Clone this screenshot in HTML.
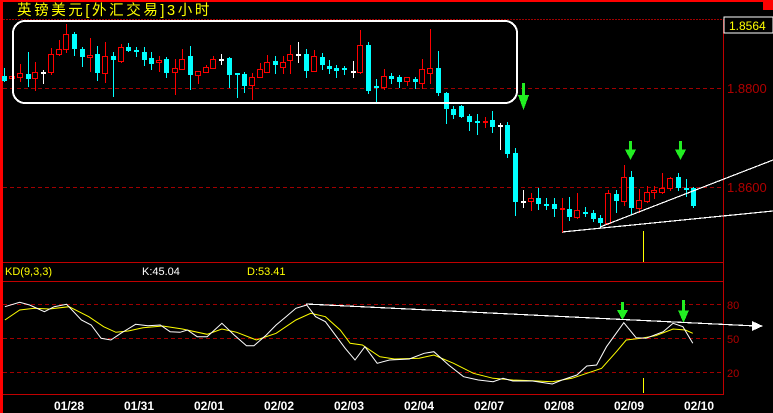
<!DOCTYPE html>
<html><head><meta charset="utf-8"><style>
html,body{margin:0;padding:0;background:#000;width:773px;height:413px;overflow:hidden}
svg{display:block}
text{font-family:"Liberation Sans","Noto Sans CJK SC",sans-serif}
</style></head><body>
<svg id="s" width="773" height="413" viewBox="0 0 773 413" xmlns="http://www.w3.org/2000/svg" shape-rendering="crispEdges">
<rect width="773" height="413" fill="#000"/>
<rect x="0" y="0" width="773" height="2" fill="#ff0000"/>
<rect x="0" y="0" width="3" height="413" fill="#ff0000"/>
<rect x="763" y="2" width="10" height="8" fill="#ff0000"/>
<line x1="3" y1="19.5" x2="723" y2="19.5" stroke="#a00000" stroke-dasharray="2,1"/>
<text x="17" y="15" fill="#ffff00" font-size="14.5" letter-spacing="2.6" font-family="'Noto Sans CJK SC',sans-serif">英镑美元[外汇交易]3小时</text>
<line x1="723.5" y1="19" x2="723.5" y2="395" stroke="#c00000"/>
<line x1="3" y1="262.5" x2="723" y2="262.5" stroke="#c00000"/>
<line x1="3" y1="281.5" x2="723" y2="281.5" stroke="#c00000"/>
<line x1="3" y1="394.5" x2="723" y2="394.5" stroke="#c00000"/>
<line x1="3" y1="88.5" x2="723" y2="88.5" stroke="#a00000" stroke-dasharray="4,3"/>
<line x1="3" y1="187.5" x2="723" y2="187.5" stroke="#a00000" stroke-dasharray="4,3"/>
<line x1="3" y1="304.5" x2="723" y2="304.5" stroke="#a00000" stroke-dasharray="4,3"/>
<line x1="3" y1="338.5" x2="723" y2="338.5" stroke="#a00000" stroke-dasharray="4,3"/>
<line x1="3" y1="372.5" x2="723" y2="372.5" stroke="#a00000" stroke-dasharray="4,3"/>
<rect x="724" y="17" width="49" height="16" fill="#000" stroke="#fff" stroke-width="1"/>
<text x="729" y="30" fill="#ffff00" font-size="12">1.8564</text>
<text x="727" y="93" fill="#b00000" font-size="13">1.8800</text>
<text x="727" y="192" fill="#b00000" font-size="13">1.8600</text>
<text x="727" y="309" fill="#b00000" font-size="11">80</text>
<text x="727" y="343" fill="#b00000" font-size="11">50</text>
<text x="727" y="377" fill="#b00000" font-size="11">20</text>
<text x="5" y="275" fill="#ffff00" font-size="11">KD(9,3,3)</text>
<text x="142" y="275" fill="#fff" font-size="11">K:45.04</text>
<text x="247" y="275" fill="#ffff00" font-size="11">D:53.41</text>
<g fill="#fff" font-size="12" font-weight="bold" text-anchor="middle">
<text x="69" y="410">01/28</text><text x="139" y="410">01/31</text><text x="209" y="410">02/01</text><text x="279" y="410">02/02</text><text x="349" y="410">02/03</text><text x="419" y="410">02/04</text><text x="489" y="410">02/07</text><text x="559" y="410">02/08</text><text x="629" y="410">02/09</text><text x="699" y="410">02/10</text>
</g>
<g id="c"></g>
<rect x="13" y="21" width="504" height="82" rx="12" fill="none" stroke="#fff" stroke-width="2"/>
<line x1="562" y1="232" x2="773" y2="211" stroke="#fff" stroke-width="1.2"/>
<line x1="600" y1="227" x2="773" y2="160" stroke="#fff" stroke-width="1.2"/>
<line x1="562.5" y1="198" x2="562.5" y2="232" stroke="#ff0000"/>
<line x1="643.5" y1="231" x2="643.5" y2="262" stroke="#ffff00"/>
<line x1="643.5" y1="378" x2="643.5" y2="393" stroke="#ffff00"/>
<line x1="306" y1="304" x2="756" y2="326" stroke="#fff" stroke-width="1.2"/>
<polygon points="752,321 763,326 752,331" fill="#fff"/>
<g id="k"></g>
</svg>
<script>
var NS="http://www.w3.org/2000/svg";
function el(p,t,a){var e=document.createElementNS(NS,t);for(var k in a)e.setAttribute(k,a[k]);p.appendChild(e);return e;}
var g=document.getElementById('c');
var C=[[4,76,81,68,81,'c'],[12,76,78,76,78,'r'],[20,73,77,64,81,'r'],[28,74,79,52,86,'c'],[35,72,78,62,90,'r'],[43,72,72,70,83,'w'],
[51,54,72,48,74,'r'],[59,49,54,40,55,'r'],[66,34,49,24,52,'r'],[74,34,49,32,55,'c'],[82,49,57,47,66,'c'],[90,55,57,38,71,'r'],
[97,54,73,46,80,'c'],[105,56,73,42,82,'r'],[113,56,60,52,96,'c'],[121,47,61,44,62,'r'],[128,47,51,43,51,'c'],[136,50,51,47,56,'c'],
[144,52,60,47,65,'c'],[151,58,64,52,69,'c'],[159,60,62,56,71,'r'],[166,59,73,57,77,'c'],[175,68,72,59,94,'r'],[182,59,69,49,69,'r'],
[190,56,75,46,89,'c'],[198,71,75,71,83,'r'],[206,67,72,65,72,'r'],[213,59,68,56,68,'r'],[221,59,59,54,64,'w'],[229,58,75,57,87,'c'],
[237,73,75,73,97,'c'],[244,74,86,72,92,'c'],[252,77,85,73,99,'r'],[260,69,77,63,77,'r'],[267,62,72,55,72,'r'],[275,61,65,56,73,'c'],
[283,62,67,56,73,'r'],[290,54,60,45,73,'r'],[298,54,54,42,62,'w'],[306,54,71,49,77,'c'],[314,56,71,50,71,'r'],[322,57,65,53,69,'c'],
[329,66,69,60,73,'c'],[336,68,71,65,77,'c'],[344,68,70,66,74,'c'],[353,71,71,61,77,'w'],[360,45,72,30,73,'r'],[368,45,91,42,93,'c'],
[376,86,87,79,103,'c'],[384,76,87,69,89,'r'],[391,76,79,73,83,'c'],[399,77,82,75,87,'c'],[407,77,81,77,85,'r'],[415,79,82,77,88,'c'],
[422,69,83,59,88,'r'],[430,68,73,29,83,'r'],[438,68,93,51,95,'c'],[446,93,109,92,123,'c'],[453,109,115,106,118,'c'],[461,106,117,105,117,'c'],
[469,116,122,114,130,'c'],[477,121,121,114,134,'c'],[485,121,121,117,127,'r'],[492,120,127,111,132,'c'],[500,125,125,123,149,'w'],
[507,125,154,122,157,'c'],[515,153,202,148,215,'c'],[523,201,201,190,207,'w'],[531,198,201,193,210,'r'],[538,198,204,188,209,'c'],
[546,204,204,198,209,'c'],[554,204,209,198,216,'c'],[562,208,208,198,232,'r'],[569,209,217,197,220,'c'],[577,210,217,193,218,'r'],
[585,212,212,207,216,'c'],[593,213,219,210,221,'c'],[600,218,223,215,226,'c'],[608,193,223,190,224,'r'],[616,194,201,190,212,'c'],
[624,177,201,165,205,'r'],[631,177,208,171,214,'c'],[639,200,208,189,212,'r'],[647,192,201,186,202,'r'],[654,190,192,186,198,'r'],
[662,188,192,173,193,'r'],[670,178,188,177,190,'r'],[678,177,188,173,190,'c'],[686,188,188,179,196,'c'],[693,188,206,187,207,'c']];
C.forEach(function(d){var x=d[0],col=d[5]=='r'?'#ff0000':(d[5]=='c'?'#00ffff':'#ffffff');
el(g,'line',{x1:x+.5,y1:d[3],x2:x+.5,y2:d[4]+1,stroke:col});
var h=d[2]-d[1];
if(h<2){el(g,'rect',{x:x-2,y:d[1],width:5,height:2,fill:col});}
else if(d[5]=='r'){el(g,'rect',{x:x-2.5,y:d[1]+.5,width:5,height:h,fill:'#000',stroke:col,'stroke-width':1.2});}
else{el(g,'rect',{x:x-2,y:d[1],width:5,height:h,fill:col});}
});
function arrow(x,y1,y2){var p=el(g,'g',{fill:'#22ee22'});
el(p,'rect',{x:x-1,y:y1,width:3,height:(y2-y1)*0.5});
el(p,'polygon',{points:(x-5)+','+(y1+(y2-y1)*0.45)+' '+(x+6)+','+(y1+(y2-y1)*0.45)+' '+(x+0.5)+','+y2});}
arrow(523,83,110);arrow(630,141,160);arrow(680,141,160);arrow(622,302,320);arrow(683,300,323);
var K=[[10,155],[40,142],[60,150],[90,170],[110,155],[135,148],[165,195],[185,210],[205,250],[225,255],[245,235],[275,208],[300,212],[325,210],[345,230],[365,232],[380,225],[400,245],[420,245],[450,205],[475,240],[500,272],[515,272],[540,240],[560,210],[580,185],[600,160],[622,150],[640,185],[660,200],[700,280],[720,315],[740,275],[765,325],[790,315],[830,312],[860,295],[880,290],[910,330],[940,365],[970,375],[1000,380],[1020,370],[1040,378],[1080,378],[1120,387],[1140,375],[1170,360],[1190,333],[1210,330],[1230,275],[1265,203],[1290,248],[1310,250],[1345,230],[1365,205],[1385,215],[1405,265]];
var D=[[10,195],[40,165],[70,160],[100,162],[140,155],[180,185],[210,215],[235,232],[260,228],[290,218],[330,213],[370,222],[420,238],[450,222],[480,232],[520,255],[560,235],[600,195],[630,175],[660,185],[690,225],[710,265],[735,270],[770,305],[800,312],[850,310],[880,300],[920,325],[960,355],[1000,370],[1040,375],[1080,377],[1120,380],[1160,370],[1190,355],[1220,340],[1250,290],[1270,255],[1300,250],[1330,242],[1365,222],[1390,225],[1405,235]];
var kg=document.getElementById('k');
function pl(a,c){el(kg,'polyline',{points:a.map(function(p){return (p[0]/2.028).toFixed(1)+','+(255+p[1]/3).toFixed(1)}).join(' '),fill:'none',stroke:c,'stroke-width':1,'shape-rendering':'auto'});}
pl(D,'#ffff00');pl(K,'#ffffff');
</script>
</body></html>
